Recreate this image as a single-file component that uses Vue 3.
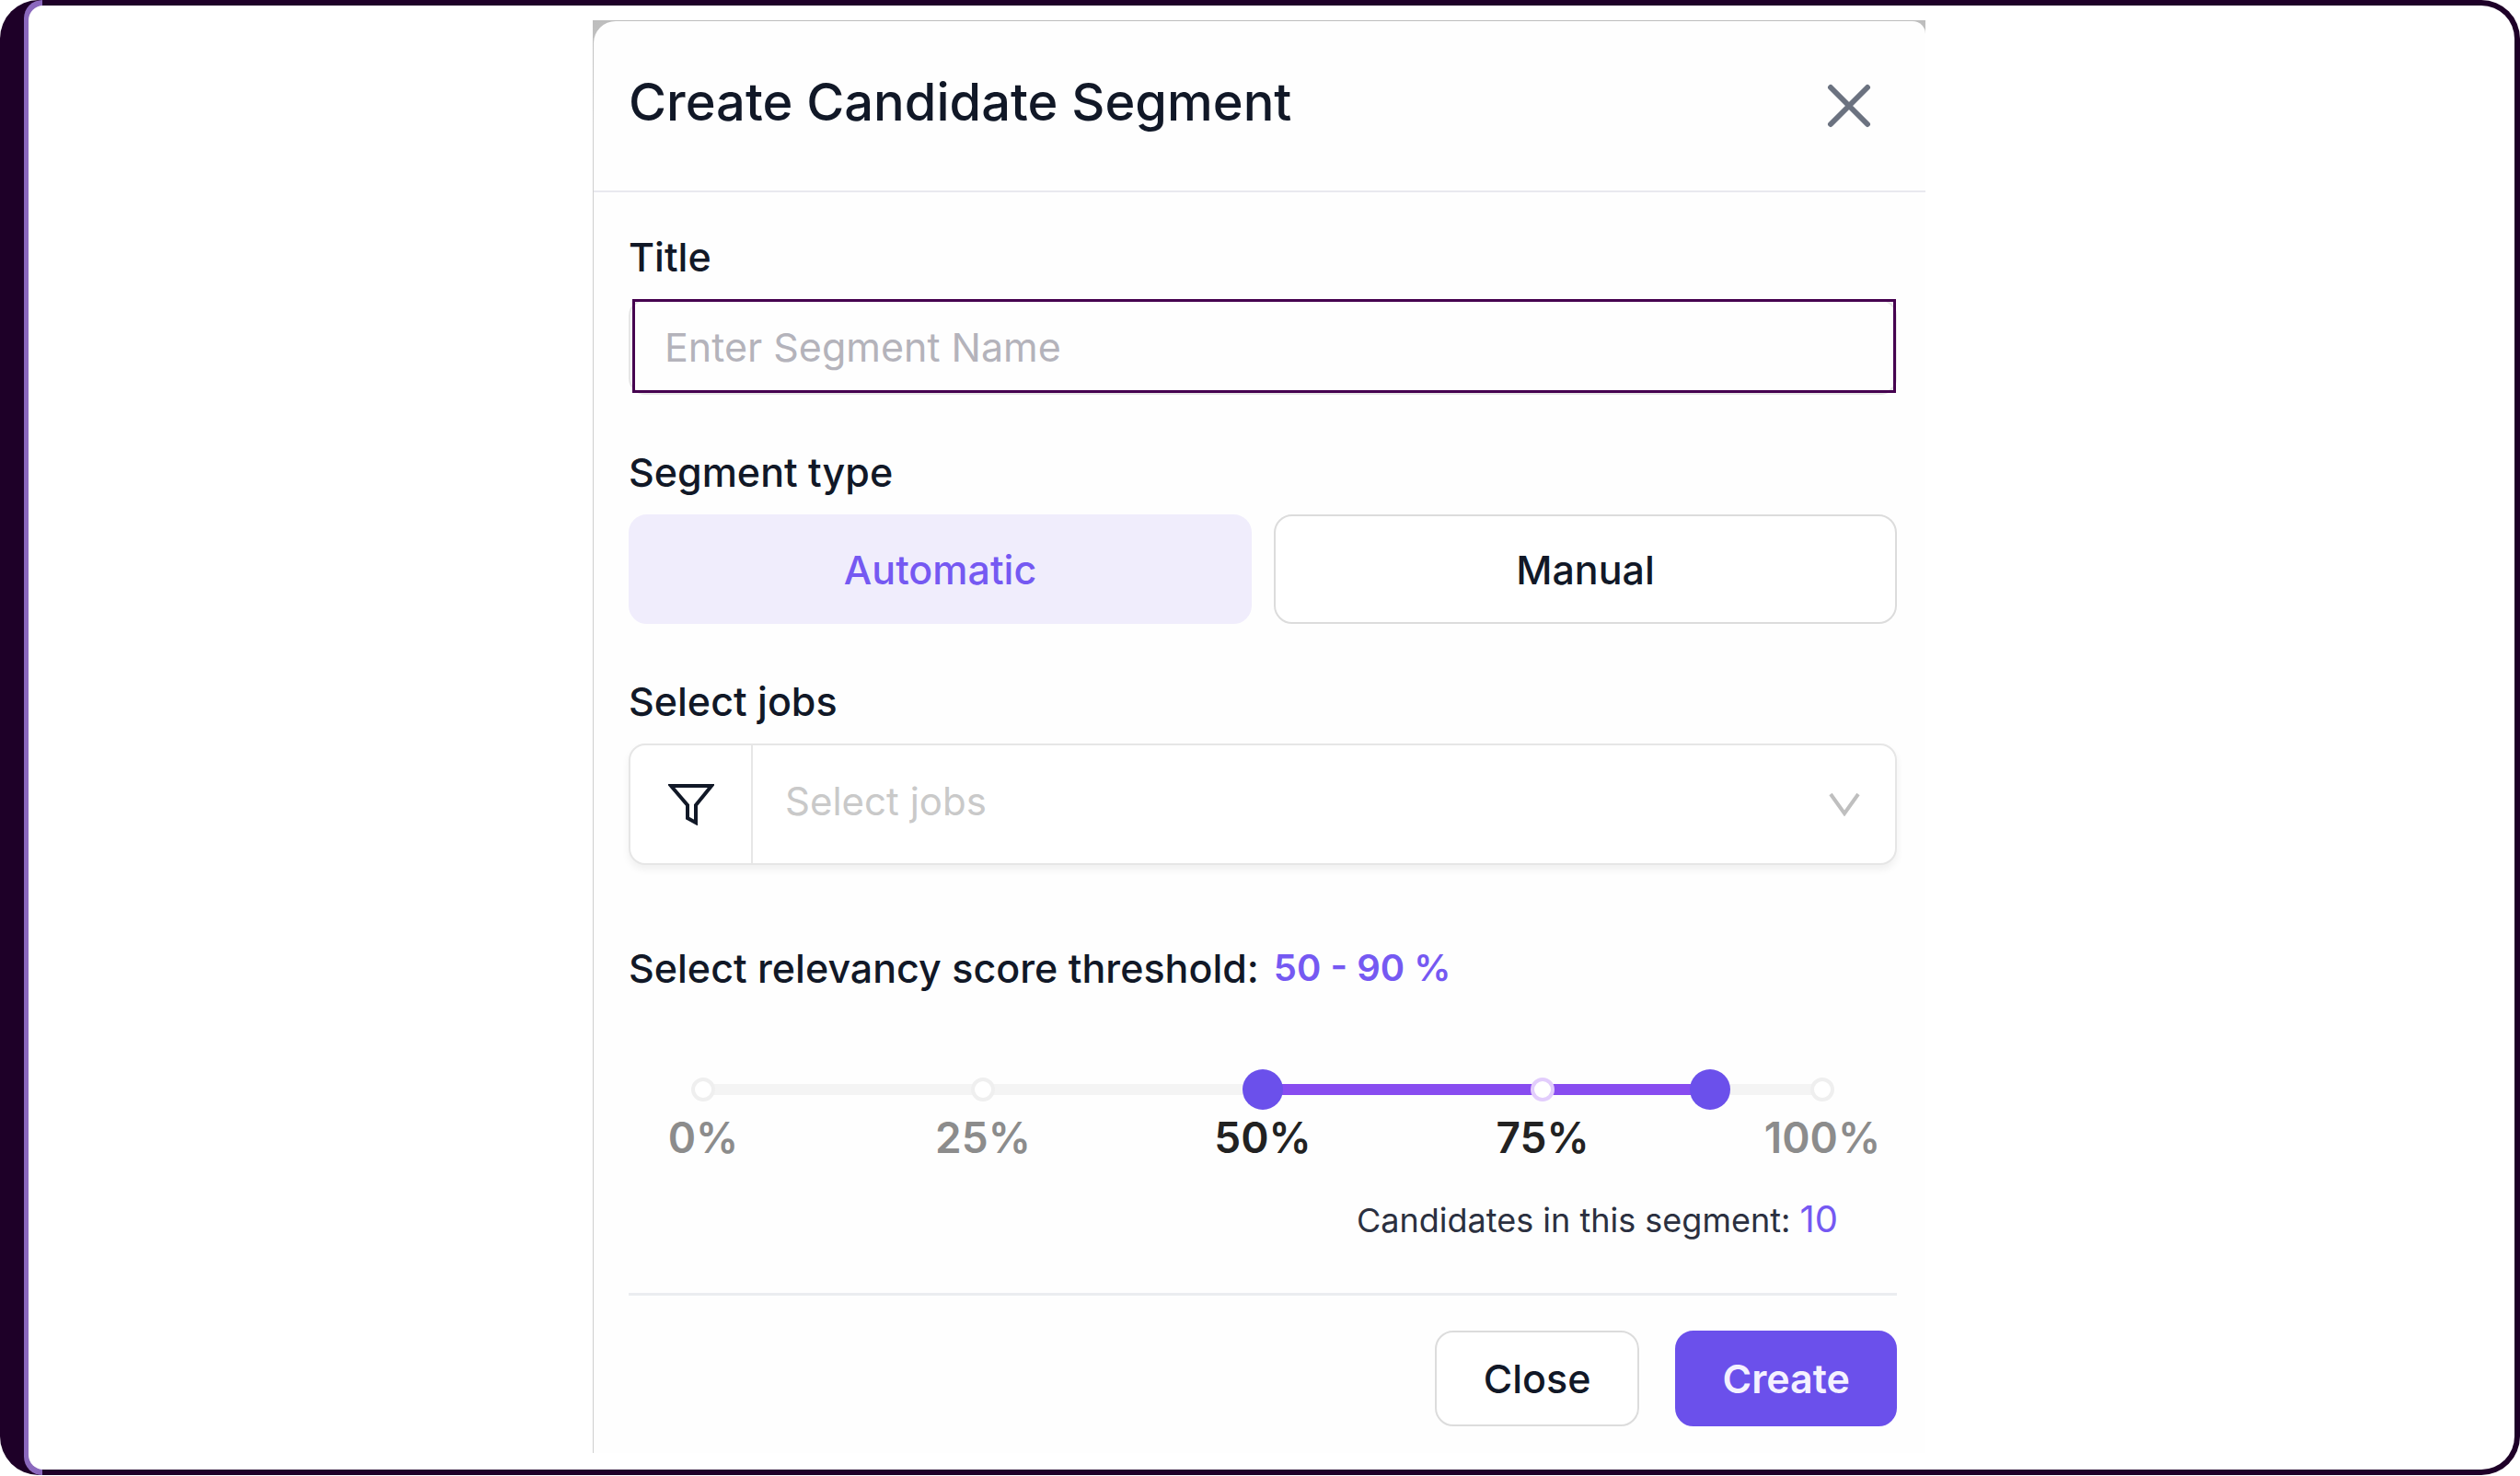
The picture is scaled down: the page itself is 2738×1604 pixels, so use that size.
<script setup>
import { computed, ref } from 'vue'

const title = ref('')
const types = ['Automatic', 'Manual']
const type = ref('Automatic')
const job = ref('')
const low = ref(50)
const high = ref(90)
const marks = [0, 25, 50, 75, 100]
const candidates = 10

const fillStyle = computed(() => ({
  left: low.value + '%',
  width: high.value - low.value + '%'
}))
const inRange = (mark) => mark >= low.value && mark <= high.value
</script>

<template>
  <div class="frame">
    <div class="accent">
      <main class="canvas">
        <div class="backdrop">
          <form class="dialog" @submit.prevent>
            <header class="header">
              <h1 class="heading">Create Candidate Segment</h1>
              <button class="dismiss" type="button" aria-label="Dismiss">
                <svg viewBox="0 0 48 48" width="48" height="48" fill="none">
                  <path d="M4 4L44 44M44 4L4 44" stroke="#6b7280" stroke-width="6" stroke-linecap="round" />
                </svg>
              </button>
            </header>

            <div class="body">
              <div class="field">
                <label class="label" for="segment-title">Title</label>
                <div class="input-shell">
                  <input id="segment-title" v-model="title" class="input" type="text" placeholder="Enter Segment Name" />
                </div>
              </div>

              <div class="field" role="group" aria-labelledby="segment-type">
                <span id="segment-type" class="label">Segment type</span>
                <div class="types">
                  <button
                    v-for="item in types"
                    :key="item"
                    type="button"
                    class="type"
                    :class="{ active: item === type }"
                    :aria-pressed="item === type"
                    @click="type = item"
                  >{{ item }}</button>
                </div>
              </div>

              <div class="field">
                <label class="label" for="jobs">Select jobs</label>
                <div class="jobs">
                  <span class="filter">
                    <svg viewBox="0 0 50 46" width="50" height="46" fill="none">
                      <path d="M3 3H47L30 24V43L21 38V24Z" stroke="#111827" stroke-width="4" />
                    </svg>
                  </span>
                  <select id="jobs" v-model="job" class="select">
                    <option value="" disabled>Select jobs</option>
                  </select>
                  <svg class="chevron" viewBox="0 0 34 26" width="34" height="26" fill="none">
                    <path d="M2 2L17 23L32 2" stroke="#bfbfbf" stroke-width="4" />
                  </svg>
                </div>
              </div>

              <div class="threshold">
                <div class="threshold-title">
                  <span class="label">Select relevancy score threshold:</span>
                  <output class="range-value">{{ low }} - {{ high }} %</output>
                </div>

                <div class="slider">
                  <div class="rail">
                    <div class="fill" :style="fillStyle"></div>
                    <span
                      v-for="mark in marks"
                      :key="mark"
                      class="dot"
                      :class="{ on: inRange(mark) }"
                      :style="{ left: mark + '%' }"
                    ></span>
                  </div>
                  <input v-model.number="low" class="handle" type="range" min="0" max="100" aria-label="Lowest score" />
                  <input v-model.number="high" class="handle" type="range" min="0" max="100" aria-label="Highest score" />
                </div>
                <div class="marks">
                  <span
                    v-for="mark in marks"
                    :key="mark"
                    class="mark"
                    :class="{ on: inRange(mark) }"
                    :style="{ left: mark + '%' }"
                  >{{ mark }}%</span>
                </div>

                <p class="summary">Candidates in this segment: <span class="count">{{ candidates }}</span></p>
              </div>

              <footer class="footer">
                <button class="btn" type="button">Close</button>
                <button class="btn primary" type="submit">Create</button>
              </footer>
            </div>
          </form>
        </div>
      </main>
    </div>
  </div>
</template>

<style>
body {
  background: #fff;
}
</style>

<style scoped>
* {
  box-sizing: border-box;
}

.frame {
  display: flex;
  min-height: calc(100vh - 2px);
  padding-left: 26px;
  border-radius: 42px;
  background: #1e0028;
  overflow: hidden;
  font-family: Inter, "Liberation Sans", sans-serif;
  color: #111827;
}

.accent {
  flex: 1;
  display: flex;
  padding: 6px 6px 6px 5px;
  border-radius: 20px 0 0 20px;
  background: linear-gradient(#8b68bd, #8b68bd) left / 20px 100% no-repeat;
}

.canvas {
  flex: 1;
  padding: 16px 27px 18px 0;
  border-radius: 16px 36px 36px 16px;
  background: #fff;
}

.backdrop {
  max-width: 1448px;
  margin: 0 auto;
  padding: 1px 0 0 1px;
  background: linear-gradient(#bdbdbd, #cfcfcf 120px);
}

.dialog {
  border-radius: 24px 14px 0 0;
  background: #fefefe;
}

.header {
  display: flex;
  align-items: center;
  justify-content: space-between;
  height: 186px;
  padding: 0 59px 0 38px;
  border-bottom: 2px solid #e9e9ef;
}

.heading {
  margin: 0;
  padding-bottom: 8px;
  font-size: 56px;
  line-height: 68px;
  font-weight: 500;
}

button {
  margin: 0;
  font-family: inherit;
  color: inherit;
  cursor: pointer;
}

.dismiss {
  display: flex;
  padding: 0;
  border: 0;
  background: none;
}

.body {
  display: flex;
  flex-direction: column;
  gap: 58px;
  padding: 44px 31px 29px 38px;
}

.field {
  display: flex;
  flex-direction: column;
  gap: 20px;
}

.label {
  font-size: 43px;
  line-height: 52px;
  font-weight: 500;
}

.input-shell {
  display: flex;
  padding: 0 1px 2px 4px;
  border-radius: 18px;
  box-shadow: inset 0 0 0 2px #e6e6e6;
}

.input {
  flex: 1;
  min-width: 0;
  height: 102px;
  padding: 2px 32px 0;
  border: 3px solid #45004f;
  border-radius: 0;
  outline: 0;
  background: transparent;
  font: 400 43px Inter, "Liberation Sans", sans-serif;
  color: #111827;
}

.input::placeholder {
  color: #b4b3bb;
  opacity: 1;
}

.types {
  display: grid;
  grid-template-columns: 1fr 1fr;
  gap: 24px;
}

.type {
  height: 119px;
  border: 2px solid #dcdcdc;
  border-radius: 20px;
  background: #fff;
  font-size: 43px;
  font-weight: 500;
}

.type.active {
  border-color: #f0edfc;
  background: #f0edfc;
  color: #7559f2;
}

.jobs {
  position: relative;
  display: flex;
  height: 132px;
  border: 2px solid #e6e6e6;
  border-radius: 18px;
  background: #fff;
  box-shadow: 0 5px 8px rgba(0, 0, 0, 0.06);
}

.filter {
  display: flex;
  align-items: center;
  justify-content: center;
  width: 133px;
  border-right: 2px solid #e6e6e6;
}

.select {
  flex: 1;
  appearance: none;
  padding: 0 80px 8px 35px;
  border: 0;
  outline: 0;
  background: transparent;
  font: 400 42px Inter, "Liberation Sans", sans-serif;
  color: #c9c9c9;
}

.chevron {
  position: absolute;
  top: 50%;
  right: 38px;
  margin-top: -13px;
  pointer-events: none;
}

.threshold {
  display: flex;
  flex-direction: column;
  margin-top: 28px;
}

.threshold-title {
  display: flex;
  align-items: center;
  gap: 16px;
}

.range-value {
  font-size: 40px;
  line-height: 52px;
  font-weight: 600;
  color: #7559f2;
}

.slider {
  position: relative;
  display: flex;
  align-items: center;
  height: 44px;
  margin: 84px 81px 0;
}

.rail {
  position: relative;
  flex: 1;
  height: 12px;
  border-radius: 6px;
  background: #f4f4f4;
}

.fill {
  position: absolute;
  top: 0;
  height: 12px;
  background: #884cf0;
}

.dot {
  position: absolute;
  top: -7px;
  width: 26px;
  height: 26px;
  margin-left: -13px;
  border: 4px solid #efefef;
  border-radius: 50%;
  background: #fff;
}

.dot.on {
  border-color: #e2cdfc;
}

.handle {
  position: absolute;
  top: 0;
  left: -22px;
  width: calc(100% + 44px);
  height: 44px;
  margin: 0;
  appearance: none;
  background: transparent;
  pointer-events: none;
}

.handle::-webkit-slider-thumb {
  appearance: none;
  width: 44px;
  height: 44px;
  border: 0;
  border-radius: 50%;
  background: #6b50eb;
  pointer-events: auto;
}

.marks {
  position: relative;
  height: 52px;
  margin: 4px 81px 0;
}

.mark {
  position: absolute;
  transform: translateX(-50%);
  font-size: 46px;
  line-height: 52px;
  font-weight: 600;
  color: #8c8c8c;
}

.mark.on {
  color: #222;
}

.summary {
  margin: 37px 64px 0;
  font-size: 36px;
  line-height: 52px;
  text-align: right;
  color: #2b3040;
}

.count {
  font-size: 40px;
  color: #7559f2;
}

.footer {
  display: flex;
  justify-content: flex-end;
  gap: 39px;
  margin-top: -5px;
  padding-top: 38px;
  border-top: 3px solid #ebedf0;
}

.btn {
  height: 104px;
  padding: 0 51px;
  border: 2px solid #dcdcdc;
  border-radius: 20px;
  background: #fff;
  font-size: 43px;
  font-weight: 500;
}

.btn.primary {
  padding: 0 49px;
  border-color: #6b50eb;
  background: #6b50eb;
  font-weight: 600;
  color: #f4f1ff;
}
</style>
